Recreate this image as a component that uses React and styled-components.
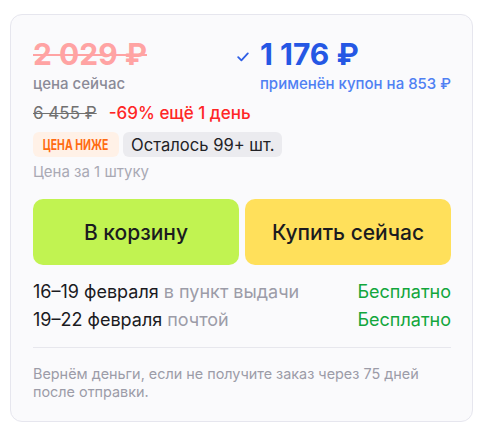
import React from "react"
import styled, { createGlobalStyle } from "styled-components"

const GlobalStyle = createGlobalStyle`
  body {
    margin: 0;
    background: #ffffff;
    font-family: Inter, "Noto Sans", sans-serif;
  }
`

const Card = styled.div`
  box-sizing: border-box;
  width: 463px;
  margin: 14px 0 0 10px;
  padding: 22px 21px 20px 22px;
  background: #fafafc;
  border: 1px solid #e6e6ee;
  border-radius: 12px;
  display: flex;
  flex-direction: column;
`

const PriceRow = styled.div`
  display: flex;
  justify-content: space-between;
  align-items: flex-start;
`

const Column = styled.div`
  display: flex;
  flex-direction: column;
`

const BigPrice = styled.div`
  font-size: 30px;
  line-height: 35px;
  font-weight: 700;
  color: ${p => p.$color};
  text-decoration: ${p => (p.$strike ? "line-through" : "none")};
  text-decoration-thickness: 2px;
`

const Caption = styled.div`
  margin-top: 2px;
  font-size: 15px;
  line-height: 20px;
  font-weight: 500;
  color: ${p => p.$color};
`

const Total = styled.div`
  display: flex;
  align-items: center;
  gap: 11px;
  margin-left: -23px;
`

const Check = styled.svg`
  width: 12px;
  height: 10px;
  margin-top: 4px;
`

const OldRow = styled.div`
  display: flex;
  align-items: baseline;
  gap: 12px;
  margin-top: 8px;
  font-size: 17px;
  line-height: 22px;
`

const Crossed = styled.span`
  color: #707070;
  text-decoration: line-through;
`

const Discount = styled.span`
  color: #ff2626;
  font-weight: 500;
`

const Badges = styled.div`
  display: flex;
  gap: 4px;
  margin-top: 8px;
`

const Badge = styled.div`
  height: 25px;
  box-sizing: border-box;
  padding: 0 8px;
  border-radius: 6px;
  display: flex;
  align-items: center;
  background: #ebebef;
  color: #222226;
  font-size: 16.6px;
`

const Accent = styled(Badge)`
  width: 86px;
  justify-content: center;
  padding: 0;
  background: #fff1e7;
  color: #ff6b12;
`

const Squeezed = styled.span`
  display: inline-block;
  font-family: Inter, sans-serif;
  font-size: 14.5px;
  font-weight: 700;
  white-space: nowrap;
  transform: scaleX(0.72);
`

const Unit = styled.div`
  margin-top: 5px;
  font-size: 15px;
  line-height: 19px;
  color: #a9a9b4;
`

const Buttons = styled.div`
  display: grid;
  grid-template-columns: 1fr 1fr;
  gap: 6px;
  margin-top: 18px;
`

const Button = styled.button`
  height: 66px;
  border: none;
  border-radius: 10px;
  background: ${p => p.$bg};
  color: #1b1b1f;
  font-family: Inter, sans-serif;
  font-size: 21px;
  font-weight: 500;
`

const Delivery = styled.div`
  margin-top: 13px;
  display: flex;
  flex-direction: column;
`

const DeliveryRow = styled.div`
  display: flex;
  justify-content: space-between;
  font-size: 18px;
  line-height: 28px;
  color: #1b1b1f;
`

const Muted = styled.span`
  color: #9c9ca8;
`

const Free = styled.span`
  color: #12a63c;
`

const Divider = styled.div`
  height: 1px;
  background: #e7e7ed;
  margin-top: 13px;
`

const Note = styled.div`
  margin-top: 17px;
  font-size: 14.4px;
  line-height: 18px;
  color: #9c9ca8;
`

export default function App() {
  return (
    <>
      <GlobalStyle />
      <Card>
        <PriceRow>
          <Column>
            <BigPrice $color="#ffa3a3" $strike>2 029 ₽</BigPrice>
            <Caption $color="#8a8a97">цена сейчас</Caption>
          </Column>
          <Column>
            <Total>
              <Check viewBox="0 0 12 10">
                <path d="M1.2 5.2 L4.4 8.4 L10.8 1.4" fill="none" stroke="#2f5fe6" strokeWidth="1.8" strokeLinecap="round" strokeLinejoin="round" />
              </Check>
              <BigPrice $color="#2557e4">1 176 ₽</BigPrice>
            </Total>
            <Caption $color="#4f80f3">применён купон на 853 ₽</Caption>
          </Column>
        </PriceRow>
        <OldRow>
          <Crossed>6 455 ₽</Crossed>
          <Discount>-69% ещё 1 день</Discount>
        </OldRow>
        <Badges>
          <Accent><Squeezed>ЦЕНА НИЖЕ</Squeezed></Accent>
          <Badge>Осталось 99+ шт.</Badge>
        </Badges>
        <Unit>Цена за 1 штуку</Unit>
        <Buttons>
          <Button $bg="#c1f351">В корзину</Button>
          <Button $bg="#ffe05b">Купить сейчас</Button>
        </Buttons>
        <Delivery>
          <DeliveryRow>
            <span>16–19 февраля <Muted>в пункт выдачи</Muted></span>
            <Free>Бесплатно</Free>
          </DeliveryRow>
          <DeliveryRow>
            <span>19–22 февраля <Muted>почтой</Muted></span>
            <Free>Бесплатно</Free>
          </DeliveryRow>
        </Delivery>
        <Divider />
        <Note>Вернём деньги, если не получите заказ через 75 дней после отправки.</Note>
      </Card>
    </>
  )
}
